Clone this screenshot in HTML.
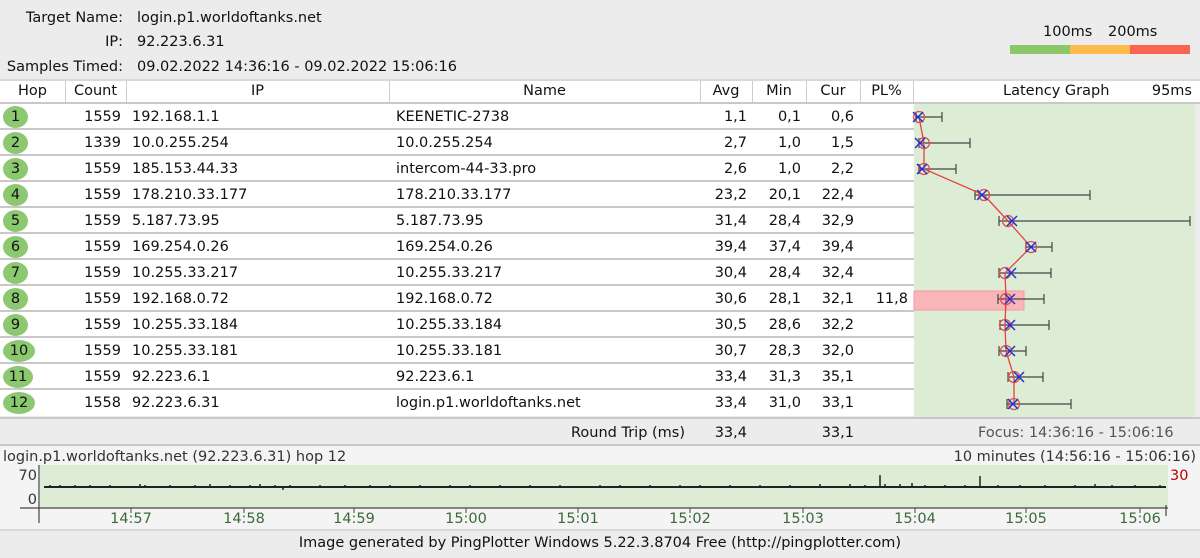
<!DOCTYPE html>
<html><head><meta charset="utf-8"><style>
*{margin:0;padding:0;box-sizing:border-box}
body{width:1200px;height:558px;background:#ececec;font-family:"DejaVu Sans","Liberation Sans",sans-serif;font-size:14.5px;color:#111;position:relative;overflow:hidden}
.a{position:absolute;white-space:nowrap;line-height:18px}
.r{text-align:right}
.c{text-align:center}
.row{position:absolute;left:0;width:914px;height:26px;background:#fff;border-bottom:2px solid #c8c8c8}
.hop{position:absolute;left:3px;top:2px;width:25px;height:22px;border-radius:50%;background:#8cc870;line-height:22px;text-align:center}
.cell{position:absolute;top:4px;line-height:18px;white-space:nowrap}
</style></head><body>
<div class="a r" style="left:0;width:123px;top:9px">Target Name:</div>
<div class="a" style="left:137px;top:9px">login.p1.worldoftanks.net</div>
<div class="a r" style="left:0;width:123px;top:33px">IP:</div>
<div class="a" style="left:137px;top:33px">92.223.6.31</div>
<div class="a r" style="left:0;width:123px;top:58px">Samples Timed:</div>
<div class="a" style="left:137px;top:58px">09.02.2022 14:36:16 - 09.02.2022 15:06:16</div>
<div class="a" style="left:1043px;top:23px">100ms</div>
<div class="a" style="left:1108px;top:23px">200ms</div>
<div style="position:absolute;left:1010px;top:45px;width:60px;height:9px;background:#8cc86a"></div>
<div style="position:absolute;left:1070px;top:45px;width:60px;height:9px;background:#fdbb4c"></div>
<div style="position:absolute;left:1130px;top:45px;width:60px;height:9px;background:#fb6450"></div>

<div style="position:absolute;left:0;top:79px;width:1200px;height:25px;background:#fff;border-top:2px solid #d8d8d8;border-bottom:2px solid #c8c8c8"></div>
<div style="position:absolute;top:81px;left:65px;width:1px;height:21px;background:#ccc"></div>
<div style="position:absolute;top:81px;left:126px;width:1px;height:21px;background:#ccc"></div>
<div style="position:absolute;top:81px;left:389px;width:1px;height:21px;background:#ccc"></div>
<div style="position:absolute;top:81px;left:700px;width:1px;height:21px;background:#ccc"></div>
<div style="position:absolute;top:81px;left:752px;width:1px;height:21px;background:#ccc"></div>
<div style="position:absolute;top:81px;left:806px;width:1px;height:21px;background:#ccc"></div>
<div style="position:absolute;top:81px;left:860px;width:1px;height:21px;background:#ccc"></div>
<div style="position:absolute;top:81px;left:913px;width:1px;height:21px;background:#ccc"></div>
<div class="a c" style="left:0;width:65px;top:82px">Hop</div>
<div class="a c" style="left:65px;width:61px;top:82px">Count</div>
<div class="a c" style="left:126px;width:263px;top:82px">IP</div>
<div class="a c" style="left:389px;width:311px;top:82px">Name</div>
<div class="a c" style="left:700px;width:52px;top:82px">Avg</div>
<div class="a c" style="left:752px;width:54px;top:82px">Min</div>
<div class="a c" style="left:806px;width:54px;top:82px">Cur</div>
<div class="a c" style="left:860px;width:53px;top:82px">PL%</div>
<div class="a" style="left:1003px;top:82px">Latency Graph</div>
<div class="a r" style="left:1100px;width:92px;top:82px">95ms</div>

<div style="position:absolute;left:914px;top:104px;width:281px;height:313px;background:#ddecd5"></div>

<div class="row" style="top:104px"><div class="hop">1</div><div class="cell r" style="left:65px;width:56px">1559</div><div class="cell" style="left:132px">192.168.1.1</div><div class="cell" style="left:396px">KEENETIC-2738</div><div class="cell r" style="left:700px;width:47px">1,1</div><div class="cell r" style="left:752px;width:49px">0,1</div><div class="cell r" style="left:806px;width:48px">0,6</div></div>
<div class="row" style="top:130px"><div class="hop">2</div><div class="cell r" style="left:65px;width:56px">1339</div><div class="cell" style="left:132px">10.0.255.254</div><div class="cell" style="left:396px">10.0.255.254</div><div class="cell r" style="left:700px;width:47px">2,7</div><div class="cell r" style="left:752px;width:49px">1,0</div><div class="cell r" style="left:806px;width:48px">1,5</div></div>
<div class="row" style="top:156px"><div class="hop">3</div><div class="cell r" style="left:65px;width:56px">1559</div><div class="cell" style="left:132px">185.153.44.33</div><div class="cell" style="left:396px">intercom-44-33.pro</div><div class="cell r" style="left:700px;width:47px">2,6</div><div class="cell r" style="left:752px;width:49px">1,0</div><div class="cell r" style="left:806px;width:48px">2,2</div></div>
<div class="row" style="top:182px"><div class="hop">4</div><div class="cell r" style="left:65px;width:56px">1559</div><div class="cell" style="left:132px">178.210.33.177</div><div class="cell" style="left:396px">178.210.33.177</div><div class="cell r" style="left:700px;width:47px">23,2</div><div class="cell r" style="left:752px;width:49px">20,1</div><div class="cell r" style="left:806px;width:48px">22,4</div></div>
<div class="row" style="top:208px"><div class="hop">5</div><div class="cell r" style="left:65px;width:56px">1559</div><div class="cell" style="left:132px">5.187.73.95</div><div class="cell" style="left:396px">5.187.73.95</div><div class="cell r" style="left:700px;width:47px">31,4</div><div class="cell r" style="left:752px;width:49px">28,4</div><div class="cell r" style="left:806px;width:48px">32,9</div></div>
<div class="row" style="top:234px"><div class="hop">6</div><div class="cell r" style="left:65px;width:56px">1559</div><div class="cell" style="left:132px">169.254.0.26</div><div class="cell" style="left:396px">169.254.0.26</div><div class="cell r" style="left:700px;width:47px">39,4</div><div class="cell r" style="left:752px;width:49px">37,4</div><div class="cell r" style="left:806px;width:48px">39,4</div></div>
<div class="row" style="top:260px"><div class="hop">7</div><div class="cell r" style="left:65px;width:56px">1559</div><div class="cell" style="left:132px">10.255.33.217</div><div class="cell" style="left:396px">10.255.33.217</div><div class="cell r" style="left:700px;width:47px">30,4</div><div class="cell r" style="left:752px;width:49px">28,4</div><div class="cell r" style="left:806px;width:48px">32,4</div></div>
<div class="row" style="top:286px"><div class="hop">8</div><div class="cell r" style="left:65px;width:56px">1559</div><div class="cell" style="left:132px">192.168.0.72</div><div class="cell" style="left:396px">192.168.0.72</div><div class="cell r" style="left:700px;width:47px">30,6</div><div class="cell r" style="left:752px;width:49px">28,1</div><div class="cell r" style="left:806px;width:48px">32,1</div><div class="cell r" style="left:860px;width:48px">11,8</div></div>
<div class="row" style="top:312px"><div class="hop">9</div><div class="cell r" style="left:65px;width:56px">1559</div><div class="cell" style="left:132px">10.255.33.184</div><div class="cell" style="left:396px">10.255.33.184</div><div class="cell r" style="left:700px;width:47px">30,5</div><div class="cell r" style="left:752px;width:49px">28,6</div><div class="cell r" style="left:806px;width:48px">32,2</div></div>
<div class="row" style="top:338px"><div class="hop" style="width:32px">10</div><div class="cell r" style="left:65px;width:56px">1559</div><div class="cell" style="left:132px">10.255.33.181</div><div class="cell" style="left:396px">10.255.33.181</div><div class="cell r" style="left:700px;width:47px">30,7</div><div class="cell r" style="left:752px;width:49px">28,3</div><div class="cell r" style="left:806px;width:48px">32,0</div></div>
<div class="row" style="top:364px"><div class="hop" style="width:30px">11</div><div class="cell r" style="left:65px;width:56px">1559</div><div class="cell" style="left:132px">92.223.6.1</div><div class="cell" style="left:396px">92.223.6.1</div><div class="cell r" style="left:700px;width:47px">33,4</div><div class="cell r" style="left:752px;width:49px">31,3</div><div class="cell r" style="left:806px;width:48px">35,1</div></div>
<div class="row" style="top:390px;border-bottom:none"><div class="hop" style="width:32px">12</div><div class="cell r" style="left:65px;width:56px">1558</div><div class="cell" style="left:132px">92.223.6.31</div><div class="cell" style="left:396px">login.p1.worldoftanks.net</div><div class="cell r" style="left:700px;width:47px">33,4</div><div class="cell r" style="left:752px;width:49px">31,0</div><div class="cell r" style="left:806px;width:48px">33,1</div></div>

<svg style="position:absolute;left:0;top:0" width="1200" height="558">
<rect x="914" y="291" width="110" height="19" fill="#f8b6b8" stroke="#f39aa0"/>
<g stroke="#444" stroke-width="1.2" fill="none">
<path d="M916 117H942M916 112v10M942 112v10"/>
<path d="M919 143H970M919 138v10M970 138v10"/>
<path d="M919 169H956M919 164v10M956 164v10"/>
<path d="M975 195H1090M975 190v10M1090 190v10"/>
<path d="M999 221H1190M999 216v10M1190 216v10"/>
<path d="M1026 247H1052M1026 242v10M1052 242v10"/>
<path d="M999 273H1051M999 268v10M1051 268v10"/>
<path d="M998 299H1044M998 294v10M1044 294v10"/>
<path d="M1000 325H1049M1000 320v10M1049 320v10"/>
<path d="M999 351H1026M999 346v10M1026 346v10"/>
<path d="M1008 377H1043M1008 372v10M1043 372v10"/>
<path d="M1007 404H1071M1007 399v10M1071 399v10"/>
</g>
<polyline fill="none" stroke="#e8403c" stroke-width="1.3" points="919,117 924,143 924,169 984,195 1008,221 1031,247 1005,273 1006,299 1005,325 1006,351 1014,377 1014,404"/>
<g fill="none" stroke="#e05050" stroke-width="1.3">
<circle cx="919" cy="117" r="5.5"/><circle cx="924" cy="143" r="5.5"/><circle cx="924" cy="169" r="5.5"/><circle cx="984" cy="195" r="5.5"/><circle cx="1008" cy="221" r="5.5"/><circle cx="1031" cy="247" r="5.5"/><circle cx="1005" cy="273" r="5.5"/><circle cx="1006" cy="299" r="5.5"/><circle cx="1005" cy="325" r="5.5"/><circle cx="1006" cy="351" r="5.5"/><circle cx="1014" cy="377" r="5.5"/><circle cx="1014" cy="404" r="5.5"/>
</g>
<g stroke="#2030d8" stroke-width="1.5">
<path d="M913 112l10 10M923 112l-10 10"/>
<path d="M915 138l10 10M925 138l-10 10"/>
<path d="M917 164l10 10M927 164l-10 10"/>
<path d="M977 190l10 10M987 190l-10 10"/>
<path d="M1007 216l10 10M1017 216l-10 10"/>
<path d="M1026 242l10 10M1036 242l-10 10"/>
<path d="M1006 268l10 10M1016 268l-10 10"/>
<path d="M1005 294l10 10M1015 294l-10 10"/>
<path d="M1005 320l10 10M1015 320l-10 10"/>
<path d="M1005 346l10 10M1015 346l-10 10"/>
<path d="M1014 372l10 10M1024 372l-10 10"/>
<path d="M1008 399l10 10M1018 399l-10 10"/>
</g>
</svg>

<div style="position:absolute;left:0;top:417px;width:1200px;height:2px;background:#c8c8c8"></div>
<div class="a" style="left:571px;top:424px">Round Trip (ms)</div>
<div class="a r" style="left:700px;width:47px;top:424px">33,4</div>
<div class="a r" style="left:806px;width:48px;top:424px">33,1</div>
<div class="a" style="left:978px;top:424px;color:#555">Focus: 14:36:16 - 15:06:16</div>
<div style="position:absolute;left:0;top:444px;width:1200px;height:2px;background:#c8c8c8"></div>
<div style="position:absolute;left:0;top:446px;width:1200px;height:83px;background:#f4f4f4"></div>
<div class="a" style="left:3px;top:448px;color:#333">login.p1.worldoftanks.net (92.223.6.31) hop 12</div>
<div class="a r" style="left:900px;width:296px;top:448px;color:#333">10 minutes (14:56:16 - 15:06:16)</div>
<div class="a r" style="left:0;width:37px;top:467px;color:#333">70</div>
<div class="a r" style="left:0;width:37px;top:491px;color:#333">0</div>
<div class="a" style="left:1170px;top:467px;color:#c00000">30</div>
<svg style="position:absolute;left:0;top:0" width="1200" height="558">
<rect x="40" y="465" width="1128" height="43" fill="#ddecd5"/>
<path d="M20 508H1168M39 465V523M1166 505V516" stroke="#444" stroke-width="1.2" fill="none"/>
<g stroke="#444" stroke-width="1"><path d="M131 508v5M244 508v5M354 508v5M466 508v5M578 508v5M690 508v5M803 508v5M915 508v5M1026 508v5M1140 508v5"/></g>
<path d="M44 487H1166" stroke="#222" stroke-width="2"/>
<g stroke="#222" stroke-width="1.5"><path d="M50 487v-2M60 487v-2M75 487v-2M90 487v-2M110 487v-2M140 487v-3M145 487v-2M170 487v-2M195 487v-2M210 487v-3M230 487v-2M250 487v-2M260 487v-3M275 487v-2M290 487v-2M320 487v-2M345 487v-2M370 487v-2M390 487v-2M420 487v-2M450 487v-2M470 487v-2M500 487v-2M530 487v-2M560 487v-2M600 487v-2M620 487v-2M650 487v-2M680 487v-2M700 487v-2M730 487v-2M760 487v-2M790 487v-2M820 487v-3M850 487v-3M865 487v-2M880 487v-12M885 487v-3M900 487v-3M912 487v-4M925 487v-2M945 487v-2M965 487v-2M980 487v-11M998 487v-2M1020 487v-2M1045 487v-2M1075 487v-2M1095 487v-3M1112 487v-2M1135 487v-2M1160 487v-2M283 487v3"/></g>
</svg>
<div class="a c" style="left:101px;width:60px;top:510px;color:#3a6a3a">14:57</div>
<div class="a c" style="left:214px;width:60px;top:510px;color:#3a6a3a">14:58</div>
<div class="a c" style="left:324px;width:60px;top:510px;color:#3a6a3a">14:59</div>
<div class="a c" style="left:436px;width:60px;top:510px;color:#3a6a3a">15:00</div>
<div class="a c" style="left:548px;width:60px;top:510px;color:#3a6a3a">15:01</div>
<div class="a c" style="left:660px;width:60px;top:510px;color:#3a6a3a">15:02</div>
<div class="a c" style="left:773px;width:60px;top:510px;color:#3a6a3a">15:03</div>
<div class="a c" style="left:885px;width:60px;top:510px;color:#3a6a3a">15:04</div>
<div class="a c" style="left:996px;width:60px;top:510px;color:#3a6a3a">15:05</div>
<div class="a c" style="left:1110px;width:60px;top:510px;color:#3a6a3a">15:06</div>
<div style="position:absolute;left:0;top:529px;width:1200px;height:2px;background:#d8d8d8"></div>
<div class="a c" style="left:0;width:1200px;top:534px">Image generated by PingPlotter Windows 5.22.3.8704 Free (http://pingplotter.com)</div>
</body></html>
